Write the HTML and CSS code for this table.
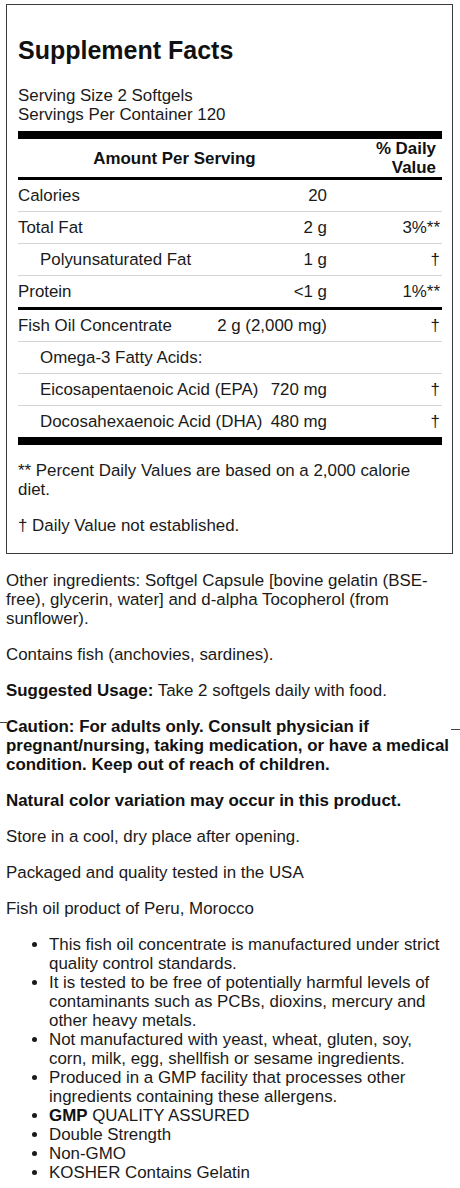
FILE: index.html
```html
<!DOCTYPE html>
<html lang="en">
<head>
<meta charset="utf-8">
<title>Supplement Facts</title>
<link rel="stylesheet" href="styles.css">
</head>
<body>
<div class="page">
  <section class="facts">
    <h1 class="title">Supplement Facts</h1>
    <div class="serving">Serving Size 2 Softgels<br>Servings Per Container 120</div>
    <div class="head-row">
      <div class="head-main">Amount Per Serving</div>
      <div class="head-dv">% Daily<br>Value</div>
    </div>
    <div class="row">
      <div class="cell-main"><span class="name">Calories</span><span class="amt">20</span></div>
      <div class="dv"></div>
    </div>
    <div class="row">
      <div class="cell-main"><span class="name">Total Fat</span><span class="amt">2 g</span></div>
      <div class="dv">3%**</div>
    </div>
    <div class="row">
      <div class="cell-main"><span class="name indent">Polyunsaturated Fat</span><span class="amt">1 g</span></div>
      <div class="dv">†</div>
    </div>
    <div class="row row-heavy">
      <div class="cell-main"><span class="name">Protein</span><span class="amt">&lt;1 g</span></div>
      <div class="dv">1%**</div>
    </div>
    <div class="row">
      <div class="cell-main"><span class="name">Fish Oil Concentrate</span><span class="amt">2 g (2,000 mg)</span></div>
      <div class="dv">†</div>
    </div>
    <div class="row">
      <div class="cell-main"><span class="name indent">Omega-3 Fatty Acids:</span><span class="amt"></span></div>
      <div class="dv"></div>
    </div>
    <div class="row">
      <div class="cell-main"><span class="name indent">Eicosapentaenoic Acid (EPA)</span><span class="amt">720 mg</span></div>
      <div class="dv">†</div>
    </div>
    <div class="row row-last">
      <div class="cell-main"><span class="name indent">Docosahexaenoic Acid (DHA)</span><span class="amt">480 mg</span></div>
      <div class="dv">†</div>
    </div>
    <p class="foot foot-first">** Percent Daily Values are based on a 2,000 calorie diet.</p>
    <p class="foot foot-last">† Daily Value not established.</p>
  </section>

  <div class="info">
    <p>Other ingredients: Softgel Capsule [bovine gelatin (BSE-free), glycerin, water] and d-alpha Tocopherol (from sunflower).</p>
    <p>Contains fish (anchovies, sardines).</p>
    <p><strong>Suggested Usage:</strong> Take 2 softgels daily with food.</p>
    <p class="caution"><strong>Caution: For adults only. Consult physician if pregnant/nursing, taking medication, or have a medical condition. Keep out of reach of children.</strong></p>
    <p><strong>Natural color variation may occur in this product.</strong></p>
    <p>Store in a cool, dry place after opening.</p>
    <p>Packaged and quality tested in the USA</p>
    <p>Fish oil product of Peru, Morocco</p>
    <ul class="bullets">
      <li>This fish oil concentrate is manufactured under strict quality control standards.</li>
      <li>It is tested to be free of potentially harmful levels of contaminants such as PCBs, dioxins, mercury and other heavy metals.</li>
      <li>Not manufactured with yeast, wheat, gluten, soy, corn, milk, egg, shellfish or sesame ingredients.</li>
      <li>Produced in a GMP facility that processes other ingredients containing these allergens.</li>
      <li><strong>GMP</strong> QUALITY ASSURED</li>
      <li>Double Strength</li>
      <li>Non-GMO</li>
      <li>KOSHER Contains Gelatin</li>
    </ul>
  </div>
</div>
</body>
</html>
```

FILE: styles.css
```css
* {
  box-sizing: border-box;
}

html, body {
  margin: 0;
  padding: 0;
  background: #ffffff;
}

body {
  font-family: "Liberation Sans", Arial, sans-serif;
  font-size: 16.9px;
  line-height: 19px;
  color: #1a1a1a;
}

.page {
  padding: 4px 6px 0 6px;
}

.facts {
  width: 447px;
  border: 1px solid #3c3c3c;
  padding: 0 10px 18px 11px;
}

.title {
  margin: 31px 0 0 0;
  font-size: 25px;
  line-height: 29px;
  font-weight: bold;
  color: #111;
}

.serving {
  margin-top: 21px;
}

.head-row {
  margin-top: 7px;
  display: flex;
  align-items: center;
  border-top: 8px solid #000;
  border-bottom: 3px solid #000;
  font-weight: bold;
  color: #111;
}

.head-main {
  flex: 1;
  text-align: center;
}

.head-dv {
  width: 111px;
  text-align: right;
  padding-right: 6px;
}

.row {
  display: flex;
  padding: 6px 0;
  border-bottom: 1px solid #d4d4d4;
}

.row-heavy {
  border-bottom: 3px solid #000;
}

.row-last {
  border-bottom: 8px solid #000;
}

.cell-main {
  flex: 1;
  display: flex;
  justify-content: space-between;
  padding-right: 4px;
}

.indent {
  padding-left: 22px;
}

.dv {
  width: 111px;
  text-align: right;
  padding-right: 2px;
}

.foot {
  margin: 0;
}

.foot-first {
  margin-top: 16px;
}

.foot-last {
  margin-top: 17px;
}

.info {
  margin-top: 17px;
  width: 446px;
}

.info p {
  margin: 0 0 17px 0;
}

.info strong {
  font-weight: bold;
  color: #111;
}

.caution {
  position: relative;
}

.caution::before {
  content: "";
  position: absolute;
  left: -6px;
  top: 5px;
  width: 7px;
  height: 1px;
  background: #444;
}

.caution::after {
  content: "";
  position: absolute;
  right: -8px;
  top: 12px;
  width: 9px;
  height: 1px;
  background: #444;
}

.bullets {
  margin: 0;
  padding-left: 43px;
}

.bullets li {
  margin: 0;
}
```
